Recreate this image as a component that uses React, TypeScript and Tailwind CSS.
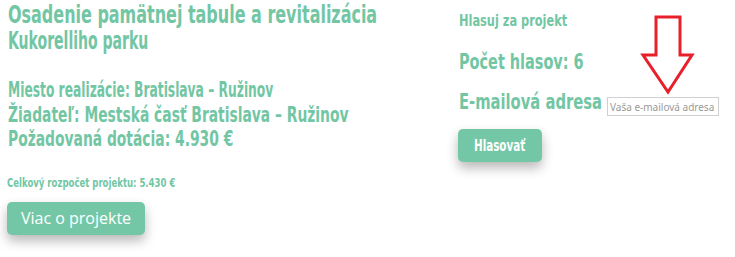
// Detail projektu — hlasovanie
import React from 'react';

const base = "inline-block origin-left whitespace-nowrap";

export default function App() {
  return (
    <div className="relative w-[735px] h-[257px] overflow-hidden bg-white text-[#72c6a4] font-['DejaVu_Sans_Condensed','DejaVu_Sans',sans-serif] font-bold">
      <div className="flex">
        {/* ľavý stĺpec */}
        <div className="w-[459px] pl-2 pt-[2px]">
          <h2 className="text-[24px] leading-[26px]">
            <span className={`${base} scale-x-[0.74]`}>Osadenie pamätnej tabule a revitalizácia</span>
            <br />
            <span className={`${base} scale-x-[0.65]`}>Kukorelliho parku</span>
          </h2>
          <div className="mt-6 text-[22px] leading-[24.5px]">
            <div><span className={`${base} scale-x-[0.62]`}>Miesto realizácie: Bratislava – Ružinov</span></div>
            <div><span className={`${base} scale-x-[0.70]`}>Žiadateľ: Mestská časť Bratislava – Ružinov</span></div>
            <div><span className={`${base} scale-x-[0.70]`}>Požadovaná dotácia: 4.930 €</span></div>
          </div>
          <div className="mt-[23px] text-[13px] leading-[16px] -ml-px">
            <span className={`${base} scale-x-[0.73]`}>Celkový rozpočet projektu: 5.430 €</span>
          </div>
          <button className="mt-[11px] -ml-px w-[138px] h-[33px] rounded-[5px] bg-[#73c7a6] text-white font-['Open_Sans',sans-serif] font-normal text-[16px] shadow-[0_6px_12px_rgba(0,0,0,0.28)]">
            Viac o projekte
          </button>
        </div>

        {/* pravý stĺpec */}
        <div className="pt-[11px]">
          <div className="text-[16px] leading-[19px]">
            <span className={`${base} scale-x-[0.79]`}>Hlasuj za projekt</span>
          </div>
          <div className="mt-[20px] text-[22px] leading-[24.5px]">
            <span className={`${base} scale-x-[0.73]`}>Počet hlasov: 6</span>
          </div>
          <div className="mt-[15.5px] flex items-start">
            <div className="w-[148px] text-[22px] leading-[24.5px]">
              <span className={`${base} scale-x-[0.745]`}>E-mailová adresa</span>
            </div>
            <input
              placeholder="Vaša e-mailová adresa"
              className="mt-[7px] w-[112px] h-[19px] border border-[#d0d0d0] px-[2px] text-[10px] font-normal font-['Noto_Sans',sans-serif] text-[#555] placeholder:text-[#9a9a9a] outline-none"
            />
          </div>
          <button className="mt-[13px] -ml-px w-[84px] h-[33px] rounded-[5px] bg-[#73c7a6] text-white text-[16px] shadow-[0_6px_12px_rgba(0,0,0,0.28)]">
            <span className="inline-block scale-x-[0.72]">Hlasovať</span>
          </button>
        </div>
      </div>

      {/* červená šípka */}
      <svg className="absolute left-[638px] top-[12px]" width="60" height="86" viewBox="0 0 60 86">
        <polygon
          points="18,5 42,5 42,43 54,43 30,80 5,43 18,43"
          fill="none"
          stroke="#e8202a"
          strokeWidth="3"
          strokeLinejoin="miter"
        />
      </svg>
    </div>
  );
}
